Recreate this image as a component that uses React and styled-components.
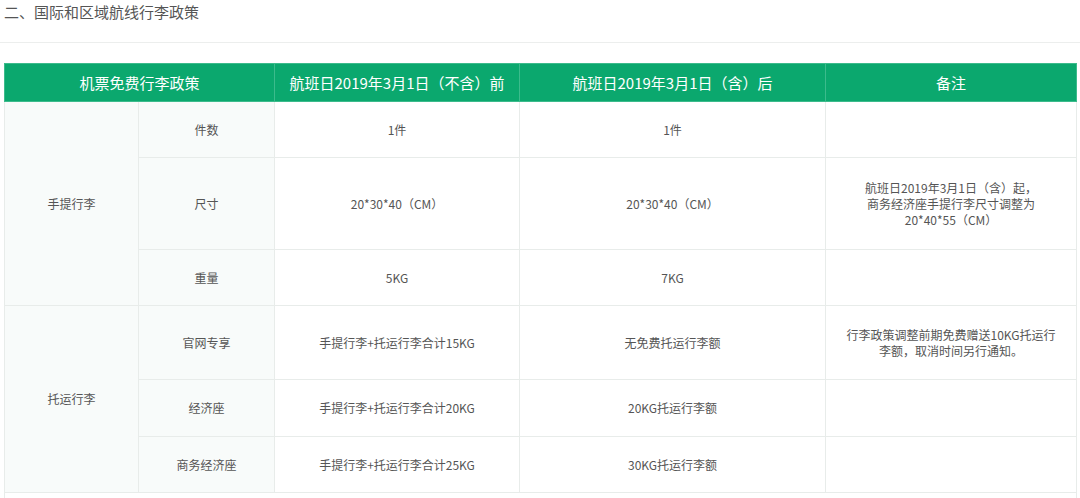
import styled, { createGlobalStyle } from 'styled-components';

const GlobalStyle = createGlobalStyle`
  html, body {
    margin: 0;
    padding: 0;
    background: #fff;
    font-family: "Microsoft YaHei", "Noto Sans CJK SC", "Noto Sans", sans-serif;
  }
`;

const Page = styled.div`
  padding: 0 4px 0 4px;
`;

const Title = styled.h3`
  margin: 2px 0 0 0;
  font-size: 15px;
  line-height: 20px;
  font-weight: normal;
  color: #555;
`;

const Rule = styled.div`
  height: 1px;
  background: #eceeed;
  margin: 20px -4px 20px -4px;
`;

const Table = styled.table`
  width: 1072px;
  border-collapse: collapse;
  table-layout: fixed;
  font-size: 12px;
  color: #555;
`;

const HeadCell = styled.th`
  height: 37px;
  padding: 0;
  background: #0ba86e;
  color: #fff;
  font-size: 15px;
  font-weight: normal;
  text-align: center;
  border: 1px solid #3cbb8c;
`;

const Cell = styled.td`
  height: ${({ h }) => h}px;
  padding: 0 14px;
  text-align: center;
  vertical-align: middle;
  line-height: 16px;
  border: 1px solid #e8ecea;
  background: ${({ side }) => (side ? '#f8fbfa' : '#fff')};
`;

const Line = styled.span`
  display: block;
  white-space: nowrap;
`;

const rows = [
  { group: '手提行李', span: 3, label: '件数', before: '1件', after: '1件', note: [], h: 55 },
  {
    label: '尺寸',
    before: '20*30*40（CM）',
    after: '20*30*40（CM）',
    note: ['航班日2019年3月1日（含）起，', '商务经济座手提行李尺寸调整为', '20*40*55（CM）'],
    h: 91,
  },
  { label: '重量', before: '5KG', after: '7KG', note: [], h: 55 },
  {
    group: '托运行李',
    span: 3,
    label: '官网专享',
    before: '手提行李+托运行李合计15KG',
    after: '无免费托运行李额',
    note: ['行李政策调整前期免费赠送10KG托运行', '李额，取消时间另行通知。'],
    h: 73,
  },
  { label: '经济座', before: '手提行李+托运行李合计20KG', after: '20KG托运行李额', note: [], h: 56 },
  { label: '商务经济座', before: '手提行李+托运行李合计25KG', after: '30KG托运行李额', note: [], h: 55 },
];

export default function App() {
  return (
    <Page>
      <GlobalStyle />
      <Title>二、国际和区域航线行李政策</Title>
      <Rule />
      <Table>
        <colgroup>
          <col style={{ width: 134 }} />
          <col style={{ width: 136 }} />
          <col style={{ width: 245 }} />
          <col style={{ width: 306 }} />
          <col style={{ width: 251 }} />
        </colgroup>
        <thead>
          <tr>
            <HeadCell colSpan={2}>机票免费行李政策</HeadCell>
            <HeadCell>航班日2019年3月1日（不含）前</HeadCell>
            <HeadCell>航班日2019年3月1日（含）后</HeadCell>
            <HeadCell>备注</HeadCell>
          </tr>
        </thead>
        <tbody>
          {rows.map((r) => (
            <tr key={r.label}>
              {r.group && (
                <Cell side rowSpan={r.span}>
                  {r.group}
                </Cell>
              )}
              <Cell side h={r.h}>{r.label}</Cell>
              <Cell h={r.h}>{r.before}</Cell>
              <Cell h={r.h}>{r.after}</Cell>
              <Cell h={r.h}>
                {r.note.map((t) => (
                  <Line key={t}>{t}</Line>
                ))}
              </Cell>
            </tr>
          ))}
          <tr>
            <Cell colSpan={5} h={56} />
          </tr>
        </tbody>
      </Table>
    </Page>
  );
}
